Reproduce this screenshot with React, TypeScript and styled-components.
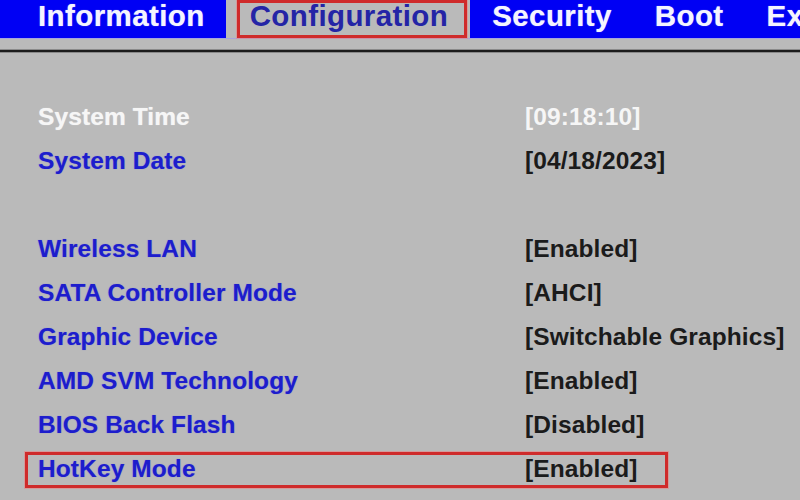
import React from 'react';
import styled, { createGlobalStyle } from 'styled-components';

const GlobalStyle = createGlobalStyle`
  html, body {
    margin: 0;
    padding: 0;
    background: #bababa;
  }
`;

const Screen = styled.div`
  width: 800px;
  height: 500px;
  overflow: hidden;
  background: #bababa;
  font-family: 'Liberation Sans', Arial, sans-serif;
  font-weight: bold;
`;

const TabBar = styled.div`
  display: flex;
  height: 38px;
  background: #0000f4;
  border-bottom: 1px solid #a6a6de;
  white-space: nowrap;
`;

const Tab = styled.div<{ first?: boolean }>`
  height: 38px;
  padding: 0 21px 0 ${({ first }) => (first ? '38px' : '22px')};
  font-size: 29.5px;
  line-height: 31px;
  letter-spacing: 0.4px;
  color: #f4f4ff;
  text-shadow: 0 0 1px rgba(220, 220, 255, 0.7);
`;

const ActiveTab = styled.div`
  height: 38px;
  padding: 0 3px 0 11px;
  background: #bababa;
`;

const Marked = styled.div`
  box-sizing: border-box;
  height: 38px;
  padding: 0 16px 7px 10px;
  border: 3px solid #cf2b2b;
  box-shadow: 0 0 0 1px rgba(235, 130, 130, 0.55);
  font-size: 29.5px;
  line-height: 25px;
  letter-spacing: 0.4px;
  color: #2424a6;
`;

const Divider = styled.div`
  margin-top: 11px;
  height: 2px;
  background: #1c1c1c;
  box-shadow: 0 1px 0 #8a8a8a, 0 -1px 0 #8a8a8a;
`;

const SettingsList = styled.div`
  padding: 43px 0 0 38px;
`;

const Row = styled.div<{ marked?: boolean }>`
  position: relative;
  display: grid;
  grid-template-columns: 487px 1fr;
  height: 44px;
  font-size: 24.5px;
  line-height: 44px;
  letter-spacing: 0.1px;
  white-space: nowrap;

  ${({ marked }) =>
    marked &&
    `
    &::after {
      content: '';
      position: absolute;
      left: -13px;
      top: 5px;
      width: 643px;
      height: 36px;
      box-sizing: border-box;
      border: 3px solid #cf2b2b;
      box-shadow: 0 0 0 1px rgba(235, 130, 130, 0.55);
    }
  `}
`;

const Label = styled.span<{ selected?: boolean }>`
  color: ${({ selected }) => (selected ? '#f6f6f6' : '#1d1dcc')};
  text-shadow: ${({ selected }) =>
    selected ? '0 0 1px rgba(255,255,255,0.6)' : '0 0 1px rgba(40,40,255,0.45)'};
`;

const Value = styled.span<{ selected?: boolean }>`
  color: ${({ selected }) => (selected ? '#f6f6f6' : '#1b1b1b')};
`;

type Setting = { label: string; value: string; selected?: boolean; marked?: boolean } | null;

const settings: Setting[] = [
  { label: 'System Time', value: '[09:18:10]', selected: true },
  { label: 'System Date', value: '[04/18/2023]' },
  null,
  { label: 'Wireless LAN', value: '[Enabled]' },
  { label: 'SATA Controller Mode', value: '[AHCI]' },
  { label: 'Graphic Device', value: '[Switchable Graphics]' },
  { label: 'AMD SVM Technology', value: '[Enabled]' },
  { label: 'BIOS Back Flash', value: '[Disabled]' },
  { label: 'HotKey Mode', value: '[Enabled]', marked: true },
];

export default function App() {
  return (
    <Screen>
      <GlobalStyle />
      <TabBar>
        <Tab first>Information</Tab>
        <ActiveTab>
          <Marked>Configuration</Marked>
        </ActiveTab>
        <Tab>Security</Tab>
        <Tab>Boot</Tab>
        <Tab>Exit</Tab>
      </TabBar>
      <Divider />
      <SettingsList>
        {settings.map((s, i) =>
          s ? (
            <Row key={i} marked={s.marked}>
              <Label selected={s.selected}>{s.label}</Label>
              <Value selected={s.selected}>{s.value}</Value>
            </Row>
          ) : (
            <Row key={i} />
          )
        )}
      </SettingsList>
    </Screen>
  );
}
